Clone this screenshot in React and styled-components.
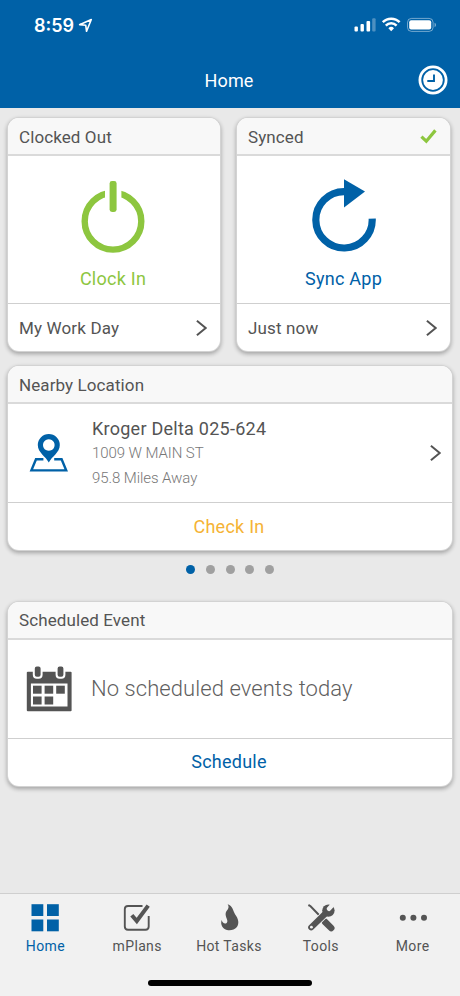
import React from 'react';
import styled, { createGlobalStyle } from "styled-components"

const GlobalStyle = createGlobalStyle`
    body {
        margin: 0;
        background-color: #e9e9e9;
        font-family: Roboto, "Liberation Sans", sans-serif;
        color: #545454;
    }

    * {
        box-sizing: border-box;
    }

    svg {
        display: block;
        flex-shrink: 0;
    }
`;

const Container = styled.div`
    width: 460px;
    height: 996px;
    display: flex;
    flex-direction: column;
    overflow: hidden;
`;

const Header = styled.header`
    height: 108px;
    background-color: #0061a7;
    color: white;
`;

const StatusBar = styled.div`
    height: 50px;
    padding: 0 24px 0 34px;
    display: flex;
    align-items: center;
    justify-content: space-between;
`;

const Time = styled.div`
    display: flex;
    align-items: center;
    gap: 4px;
    font-family: Inter, sans-serif;
    font-size: 18px;
    font-weight: 600;
`;

const TitleBar = styled.div`
    height: 58px;
    padding: 2px 12px 0 10px;
    display: grid;
    grid-template-columns: 30px 1fr 30px;
    align-items: center;
`;

const Title = styled.h1`
    grid-column: 2;
    margin: 0;
    text-align: center;
    font-size: 18px;
    font-weight: 400;
    letter-spacing: 0.1px;
`;

const Main = styled.main`
    flex: 1;
    padding: 10px 8px 0;
`;

const Row = styled.div`
    display: grid;
    grid-template-columns: 212px 213px;
    gap: 17px;
    margin-bottom: 15px;
`;

const Card = styled.section`
    background-color: white;
    border-radius: 11px;
    overflow: hidden;
    box-shadow: 0 0 0 1px #d3d3d3, 0 2px 4px 1px rgba(0, 0, 0, 0.3);
`;

const CardHeader = styled.div`
    height: 38px;
    padding: 1px 13px 0 11px;
    display: flex;
    align-items: center;
    justify-content: space-between;
    background-color: #f8f8f8;
    border-bottom: 2px solid #dadada;
    font-size: 17px;
    letter-spacing: 0.1px;
`;

const CardBody = styled.div`
    height: ${props => props.$height}px;
    padding: ${props => props.$padding};
    display: flex;
    flex-direction: ${props => props.$column ? "column" : "row"};
    align-items: center;
    gap: ${props => props.$gap}px;
`;

const Action = styled.div`
    color: ${props => props.$color};
    font-size: 18px;
    line-height: 22px;
    letter-spacing: 0.25px;
`;

const CardFooter = styled.div`
    height: 48px;
    padding: 0 12px 0 11px;
    display: flex;
    align-items: center;
    justify-content: ${props => props.$center ? "center" : "space-between"};
    border-top: 1px solid #cfcfcf;
    font-size: 17px;
    letter-spacing: 0.15px;
`;

const CenterFooter = styled(CardFooter)`
    justify-content: center;
    padding: 0 2px 0 0;
`;

const Place = styled.div`
    flex: 1;
    display: flex;
    flex-direction: column;
`;

const PlaceName = styled.div`
    font-size: 18px;
    line-height: 25px;
    letter-spacing: 0.25px;
`;

const PlaceInfo = styled.div`
    color: #777;
    font-size: 15px;
    font-weight: 300;
    line-height: 24.5px;
    letter-spacing: -0.08px;
`;

const Dots = styled.div`
    height: 51.5px;
    padding-bottom: 13px;
    display: flex;
    align-items: center;
    justify-content: center;
    gap: 10.6px;
`;

const Dot = styled.span`
    width: 9px;
    height: 9px;
    border-radius: 50%;
    background-color: ${props => props.$active ? "#0061a7" : "#a0a0a0"};
`;

const Message = styled.div`
    color: #5f5f5f;
    font-size: 22px;
    font-weight: 300;
    letter-spacing: 0.07px;
`;

const TabBar = styled.nav`
    height: 103px;
    background-color: #f1f1f1;
    border-top: 1px solid #cfcfcf;
`;

const Tabs = styled.div`
    width: 459px;
    height: 86px;
    display: grid;
    grid-template-columns: repeat(5, 1fr);
`;

const Tab = styled.div`
    padding: 10px 1px 0 0;
    display: flex;
    flex-direction: column;
    align-items: center;
    gap: 4px;
    color: ${props => props.$active ? "#0061a7" : "#545454"};
    font-size: 14px;
    line-height: 20px;
    letter-spacing: 0.35px;
`;

const HomeIndicator = styled.div`
    width: 164px;
    height: 6px;
    margin: 0 auto;
    border-radius: 3px;
    background-color: black;
`;

const LocationArrow = () => (
    <svg width="15" height="15" viewBox="0 0 14 14" fill="none" stroke="white" strokeWidth="1.5" strokeLinejoin="round">
        <path d="M1.5 6.2 L12.4 1.4 L8 12.4 L7.2 6.7 Z" />
    </svg>
);

const StatusIcons = () => (
    <svg width="82" height="16" viewBox="0 0 82 16" fill="white">
        <rect x="0.5" y="9.5" width="3.4" height="5" rx="1" />
        <rect x="6.5" y="7" width="3.4" height="7.5" rx="1" />
        <rect x="12.5" y="4" width="3.6" height="10.5" rx="1" />
        <rect x="18.2" y="1.2" width="3.4" height="13.3" rx="1" opacity="0.3" />
        <g fill="none" stroke="white" strokeWidth="2.5">
            <path d="M28.8 5.2 a11.8 11.8 0 0 1 16.8 0" />
            <path d="M31.8 8.6 a7.6 7.6 0 0 1 10.8 0" />
        </g>
        <path d="M34.4 11.2 a4 4 0 0 1 5.6 0 L37.2 14.3 Z" />
        <rect x="53.5" y="1.4" width="25.6" height="13" rx="4" fill="none" stroke="white" opacity="0.45" />
        <rect x="55.2" y="3.2" width="22" height="9.4" rx="2" />
        <path d="M80.6 5.8 v4.4 q1.4 -0.6 1.4 -2.2 t-1.4 -2.2" opacity="0.5" />
    </svg>
);

const ClockIcon = () => (
    <svg width="30" height="30" viewBox="0 0 30 30">
        <circle cx="15" cy="15" r="13.1" fill="none" stroke="white" strokeWidth="2.8" />
        <circle cx="15" cy="15" r="9.9" fill="white" />
        <path d="M16 9.5 V16 H9.3" fill="none" stroke="#0061a7" strokeWidth="1.9" />
    </svg>
);

const PowerIcon = () => (
    <svg width="64" height="72" viewBox="0 0 64 72">
        <circle cx="32" cy="40.3" r="28.3" fill="none" stroke="#8dc63f" strokeWidth="6.4" />
        <rect x="24" y="6" width="16.4" height="24" fill="white" />
        <rect x="28.6" y="0" width="7" height="31" rx="2.4" fill="#8dc63f" />
    </svg>
);

const SyncIcon = () => (
    <svg width="64" height="74" viewBox="0 0 64 74">
        <path d="M32 12.6 A28.2 28.2 0 1 0 60.2 39.6" fill="none" stroke="#0061a7" strokeWidth="7.2" />
        <path d="M32 0.2 L53 12.4 L32 28.6 Z" fill="#0061a7" />
    </svg>
);

const CheckIcon = () => (
    <svg width="17" height="15" viewBox="0 0 17 15">
        <path d="M1.4 7.6 L6.3 12.2 L15.4 1.4" fill="none" stroke="#8dc63f" strokeWidth="3.2" />
    </svg>
);

const Chevron = () => (
    <svg width="12" height="16" viewBox="0 0 12 16">
        <path d="M0.9 0.8 L9.7 8 L0.9 15.2" fill="none" stroke="#545454" strokeWidth="2" />
    </svg>
);

const PinIcon = () => (
    <svg width="40" height="38" viewBox="0 0 40 38" fill="#0061a7">
        <path fillRule="evenodd" d="M19.8 28.6 C17 22.5 8.8 18.7 8.8 11 A11 11 0 0 1 30.8 11 C30.8 18.7 22.6 22.5 19.8 28.6 Z M19.8 5.2 a5.8 5.8 0 1 0 0.01 0 Z" />
        <path fill="none" stroke="#0061a7" strokeWidth="2.4" d="M14.4 25.2 H7 L2.4 36.4 H37.2 L32.6 25.2 H25.2" />
    </svg>
);

const CalendarIcon = () => (
    <svg width="46" height="46" viewBox="0 0 46 46" fill="#545454">
        <rect x="0.8" y="5.8" width="44.8" height="39.5" rx="1" />
        <rect x="4.9" y="17.5" width="36.6" height="23" fill="white" />
        <g stroke="white" strokeWidth="2">
            <rect x="7.8" y="-0.6" width="7.8" height="12.4" rx="3" />
            <rect x="30.6" y="-0.6" width="7.8" height="12.4" rx="3" />
        </g>
        <rect x="7" y="19.7" width="8.6" height="8" />
        <rect x="18.6" y="19.7" width="8.6" height="8" />
        <rect x="30.2" y="19.7" width="8.6" height="8" />
        <rect x="7" y="30.5" width="8.6" height="8" />
        <rect x="18.6" y="30.5" width="8.6" height="8" />
    </svg>
);

const HomeIcon = () => (
    <svg width="28" height="28" viewBox="0 0 28 28" fill="#0061a7">
        <rect x="0.5" y="0.2" width="11.8" height="11.8" />
        <rect x="16" y="0.2" width="11.8" height="11.8" />
        <rect x="0.5" y="15.5" width="11.8" height="11.8" />
        <rect x="16" y="15.5" width="11.8" height="11.8" />
    </svg>
);

const PlansIcon = () => (
    <svg width="28" height="28" viewBox="0 0 28 28" fill="none" stroke="#545454">
        <path strokeWidth="1.9" d="M19.5 2 H5 Q1.8 2 1.8 5 V22.5 Q1.8 25.7 5 25.7 H22.5 Q25.7 25.7 25.7 22.5 V12" />
        <path strokeWidth="4" d="M8.8 11.2 L13.8 17 L25.2 1.6" />
    </svg>
);

const FlameIcon = () => (
    <svg width="28" height="28" viewBox="14 18 84 84" fill="#545454">
        <path d="M52 19 C68 24 67 38 75 50 C84 62 88 76 79 88 C73 96 60 98 50 96 C38 93 29 81 34 66 C36 74 43 80 49 75 C56 68 44 58 46 46 C48 36 60 32 52 19 Z" />
    </svg>
);

const ToolsIcon = () => (
    <svg width="28" height="28" viewBox="0 0 28 28" fill="none" stroke="#545454">
        <path d="M1.4 1 L3.6 2.2 L12 11" strokeWidth="2" />
        <path d="M18 17.8 L24.2 24" strokeWidth="6.6" strokeLinecap="round" />
        <path d="M5 22.8 L20 8" stroke="#f1f1f1" strokeWidth="7.8" />
        <path d="M4.2 23.4 L20 8" strokeWidth="6" strokeLinecap="round" />
        <circle cx="21.4" cy="6.6" r="6.2" fill="#545454" stroke="none" />
        <path d="M27.6 -1.4 L22 4.8" stroke="#f1f1f1" strokeWidth="4.4" strokeLinecap="round" />
        <circle cx="4.4" cy="23.2" r="1.4" fill="#f1f1f1" stroke="none" />
    </svg>
);

const MoreIcon = () => (
    <svg width="28" height="28" viewBox="0 0 28 28" fill="#545454">
        <circle cx="3.8" cy="13.8" r="3" />
        <circle cx="14.4" cy="13.8" r="3" />
        <circle cx="25" cy="13.8" r="3" />
    </svg>
);

const tabs = [
    { label: "Home", icon: HomeIcon, active: true },
    { label: "mPlans", icon: PlansIcon },
    { label: "Hot Tasks", icon: FlameIcon },
    { label: "Tools", icon: ToolsIcon },
    { label: "More", icon: MoreIcon },
];

const App = () => {
  return (
    <Container>
        <GlobalStyle />
        <Header>
            <StatusBar>
                <Time>8:59 <LocationArrow /></Time>
                <StatusIcons />
            </StatusBar>
            <TitleBar>
                <Title>Home</Title>
                <ClockIcon />
            </TitleBar>
        </Header>
        <Main>
            <Row>
                <Card>
                    <CardHeader>Clocked Out</CardHeader>
                    <CardBody $column $height={147} $gap={15} $padding="25px 2px 0 0">
                        <PowerIcon />
                        <Action $color="#8dc63f">Clock In</Action>
                    </CardBody>
                    <CardFooter>My Work Day <Chevron /></CardFooter>
                </Card>
                <Card>
                    <CardHeader>Synced <CheckIcon /></CardHeader>
                    <CardBody $column $height={147} $gap={15} $padding="23px 0 0 0">
                        <SyncIcon />
                        <Action $color="#0061a7">Sync App</Action>
                    </CardBody>
                    <CardFooter>Just now <Chevron /></CardFooter>
                </Card>
            </Row>
            <Card>
                <CardHeader>Nearby Location</CardHeader>
                <CardBody $height={98} $gap={23} $padding="0 10px 0 21px">
                    <PinIcon />
                    <Place>
                        <PlaceName>Kroger Delta 025-624</PlaceName>
                        <PlaceInfo>1009 W MAIN ST</PlaceInfo>
                        <PlaceInfo>95.8 Miles Away</PlaceInfo>
                    </Place>
                    <Chevron />
                </CardBody>
                <CenterFooter><Action $color="#f5b335">Check In</Action></CenterFooter>
            </Card>
            <Dots>
                {[0, 1, 2, 3, 4].map(i => <Dot key={i} $active={i === 0} />)}
            </Dots>
            <Card>
                <CardHeader>Scheduled Event</CardHeader>
                <CardBody $height={98} $gap={19} $padding="0 12px 0 18px">
                    <CalendarIcon />
                    <Message>No scheduled events today</Message>
                </CardBody>
                <CenterFooter><Action $color="#0061a7">Schedule</Action></CenterFooter>
            </Card>
        </Main>
        <TabBar>
            <Tabs>
                {tabs.map(({ label, icon: Icon, active }) => (
                    <Tab key={label} $active={active}>
                        <Icon />
                        {label}
                    </Tab>
                ))}
            </Tabs>
            <HomeIndicator />
        </TabBar>
    </Container>
  )
}

export default App
